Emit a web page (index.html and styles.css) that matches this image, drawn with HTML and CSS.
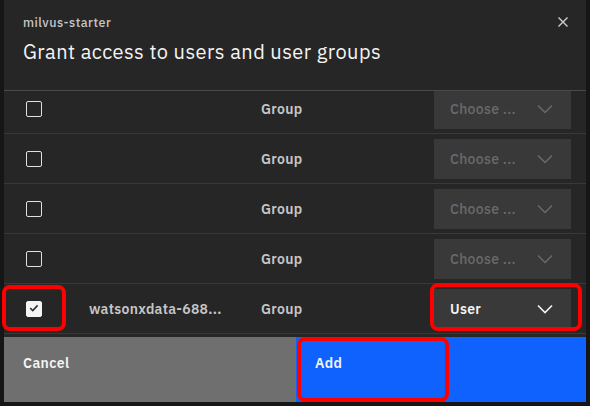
FILE: index.html
```html
<!DOCTYPE html>
<html>
<head>
<meta charset="utf-8">
<link rel="stylesheet" href="styles.css">
</head>
<body>
<div class="page">
  <div class="modal">
    <div class="header">
      <div class="label">milvus-starter</div>
      <div class="title">Grant access to users and user groups</div>
      <svg class="close" width="12" height="12" viewBox="0 0 12 12"><path d="M1.5 1.5 L10.5 10.5 M10.5 1.5 L1.5 10.5" stroke="#d0d0d0" stroke-width="1.4" fill="none"/></svg>
    </div>
    <div class="table">
      <div class="rows">
        <div class="row">
          <span class="cb"></span><span class="name"></span><span class="type">Group</span>
          <div class="dd disabled"><span>Choose ...</span><svg width="16" height="10" viewBox="0 0 16 10"><path d="M1 1.5 L8 8.5 L15 1.5" stroke="currentColor" stroke-width="1.5" fill="none"/></svg></div>
        </div>
        <div class="row">
          <span class="cb"></span><span class="name"></span><span class="type">Group</span>
          <div class="dd disabled"><span>Choose ...</span><svg width="16" height="10" viewBox="0 0 16 10"><path d="M1 1.5 L8 8.5 L15 1.5" stroke="currentColor" stroke-width="1.5" fill="none"/></svg></div>
        </div>
        <div class="row">
          <span class="cb"></span><span class="name"></span><span class="type">Group</span>
          <div class="dd disabled"><span>Choose ...</span><svg width="16" height="10" viewBox="0 0 16 10"><path d="M1 1.5 L8 8.5 L15 1.5" stroke="currentColor" stroke-width="1.5" fill="none"/></svg></div>
        </div>
        <div class="row">
          <span class="cb"></span><span class="name"></span><span class="type">Group</span>
          <div class="dd disabled"><span>Choose ...</span><svg width="16" height="10" viewBox="0 0 16 10"><path d="M1 1.5 L8 8.5 L15 1.5" stroke="currentColor" stroke-width="1.5" fill="none"/></svg></div>
        </div>
        <div class="row">
          <span class="cb checked"><svg width="16" height="16" viewBox="0 0 16 16"><path d="M4.2 8.2 L6.8 10.6 L11.6 5.4" stroke="#333" stroke-width="1.6" fill="none"/></svg></span><span class="name">watsonxdata-688...</span><span class="type">Group</span>
          <div class="dd"><span>User</span><svg width="16" height="10" viewBox="0 0 16 10"><path d="M1 1.5 L8 8.5 L15 1.5" stroke="currentColor" stroke-width="1.6" fill="none"/></svg></div>
        </div>
      </div>
    </div>
    <div class="footer">
      <div class="btn cancel">Cancel</div>
      <div class="btn add">Add</div>
    </div>
  </div>
  <div class="mark mark-cb"></div>
  <div class="mark mark-dd"></div>
  <div class="mark mark-add"></div>
</div>
</body>
</html>
```
FILE: styles.css
```css
* { box-sizing: border-box; }
html, body { margin: 0; padding: 0; }
body {
  background: #161616;
  font-family: "IBM Plex Sans", "Noto Sans", sans-serif;
  width: 590px;
  height: 406px;
  overflow: hidden;
}
.page { position: relative; width: 590px; height: 406px; }
.modal {
  margin-left: 4px;
  width: 582px;
  height: 402px;
  background: #262626;
  display: flex;
  flex-direction: column;
}
.header {
  position: relative;
  height: 90px;
  padding: 14px 0 0 19px;
}
.label {
  font-size: 12.5px;
  line-height: 16px;
  letter-spacing: 0.5px;
  color: #c6c6c6;
  font-weight: 500;
}
.title {
  margin-top: 8px;
  font-size: 20px;
  line-height: 28px;
  letter-spacing: 0.45px;
  color: #f4f4f4;
}
.close { position: absolute; right: 17px; top: 16px; }
.table {
  height: 247px;
  overflow: hidden;
  border-top: 1px solid #4a4a4a;
}
.rows { margin-top: -7px; }
.row {
  height: 50px;
  border-bottom: 1px solid #393939;
  display: grid;
  grid-template-columns: 63px 172px 173px 137px;
  align-items: center;
  padding-left: 22px;
  font-size: 14px;
  letter-spacing: 0.3px;
  font-weight: 600;
  color: #c6c6c6;
}
.cb {
  width: 16px; height: 16px;
  border: 1.5px solid #e0e0e0;
  border-radius: 2px;
  display: block;
}
.cb.checked { background: #f4f4f4; border-color: #f4f4f4; position: relative; }
.cb.checked svg { position: absolute; left: -1.5px; top: -1.5px; }
.name { white-space: nowrap; overflow: hidden; }
.dd {
  height: 40px;
  background: #393939;
  display: flex;
  align-items: center;
  justify-content: space-between;
  padding: 0 18px 0 16px;
  color: #f4f4f4;
  font-size: 14px;
  font-weight: 600;
}
.dd.disabled { color: #6a6a6a; font-weight: 500; }
.footer {
  display: flex;
  height: 65px;
  margin-top: auto;
}
.btn {
  flex: 1;
  padding: 17px 0 0 19px;
  font-size: 14px;
  letter-spacing: 0.4px;
  line-height: 18px;
  color: #f4f4f4;
  font-weight: 600;
}
.cancel { background: #6f6f6f; flex: 0 0 292px; }
.add { background: #0f62fe; }
.mark {
  position: absolute;
  border: 4px solid #ff0000;
  border-radius: 8px;
}
.mark-cb { left: 2px; top: 285px; width: 64px; height: 46px; }
.mark-dd { left: 430px; top: 283px; width: 152px; height: 48px; }
.mark-add { left: 297px; top: 337px; width: 152px; height: 65px; }
```
